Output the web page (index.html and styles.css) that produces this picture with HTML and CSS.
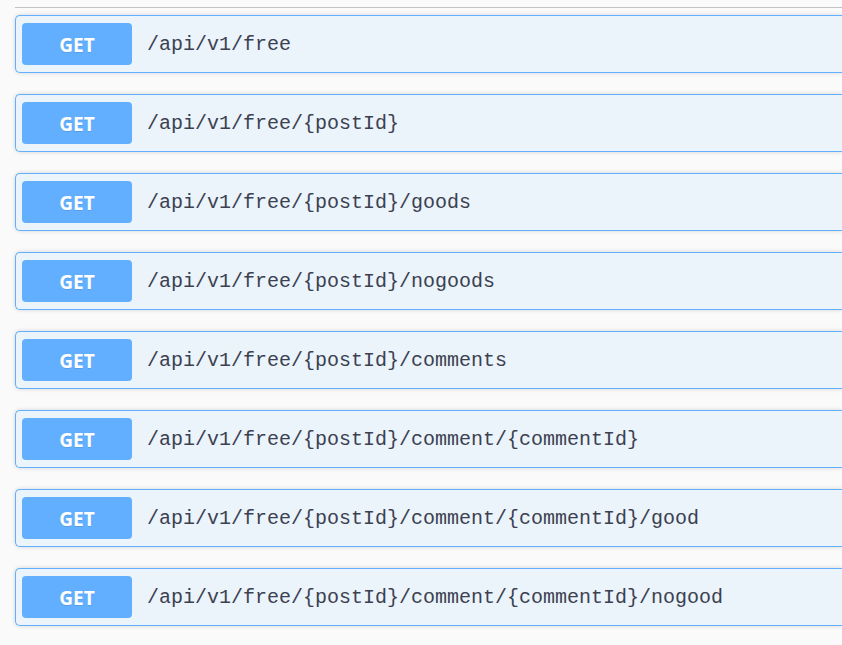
FILE: index.html
```html
<!DOCTYPE html>
<html>
<head>
<meta charset="utf-8">
<link rel="stylesheet" href="styles.css">
</head>
<body>
<div class="section">
  <div class="tag-line"></div>
  <div class="ops">
    <div class="opblock"><span class="method">GET</span><span class="path">/api/v1/free</span></div>
    <div class="opblock"><span class="method">GET</span><span class="path">/api/v1/free/{postId}</span></div>
    <div class="opblock"><span class="method">GET</span><span class="path">/api/v1/free/{postId}/goods</span></div>
    <div class="opblock"><span class="method">GET</span><span class="path">/api/v1/free/{postId}/nogoods</span></div>
    <div class="opblock"><span class="method">GET</span><span class="path">/api/v1/free/{postId}/comments</span></div>
    <div class="opblock"><span class="method">GET</span><span class="path">/api/v1/free/{postId}/comment/{commentId}</span></div>
    <div class="opblock"><span class="method">GET</span><span class="path">/api/v1/free/{postId}/comment/{commentId}/good</span></div>
    <div class="opblock"><span class="method">GET</span><span class="path">/api/v1/free/{postId}/comment/{commentId}/nogood</span></div>
  </div>
</div>
</body>
</html>
```
FILE: styles.css
```css
html, body {
  margin: 0;
  padding: 0;
  background: #fafafa;
}
body {
  width: 842px;
  height: 645px;
  overflow: hidden;
}
.section {
  padding: 7px 0 0 15px;
}
.tag-line {
  height: 1px;
  background: #c2c3c6;
  margin-bottom: 7px;
}
.ops {
  display: flex;
  flex-direction: column;
  gap: 21px;
}
.opblock {
  display: flex;
  align-items: center;
  box-sizing: border-box;
  height: 58px;
  padding: 0 6px;
  border: 1px solid #61affe;
  border-right: 0;
  border-radius: 5px 0 0 5px;
  background: #ebf3fb;
  box-shadow: 0 0 4px rgba(0, 0, 0, 0.16);
}
.method {
  display: flex;
  align-items: center;
  justify-content: center;
  box-sizing: border-box;
  width: 110px;
  height: 42px;
  padding-top: 2px;
  border-radius: 4px;
  background: #61affe;
  color: #fff;
  font-family: "Open Sans", "Liberation Sans", sans-serif;
  font-weight: 700;
  font-size: 19px;
  text-shadow: 0 1px 0 rgba(0, 0, 0, 0.1);
}
.path {
  padding: 2px 0 0 15px;
  color: #3b4151;
  font-family: "Liberation Mono", "DejaVu Sans Mono", monospace;
  font-size: 20px;
  line-height: 24px;
}
```
